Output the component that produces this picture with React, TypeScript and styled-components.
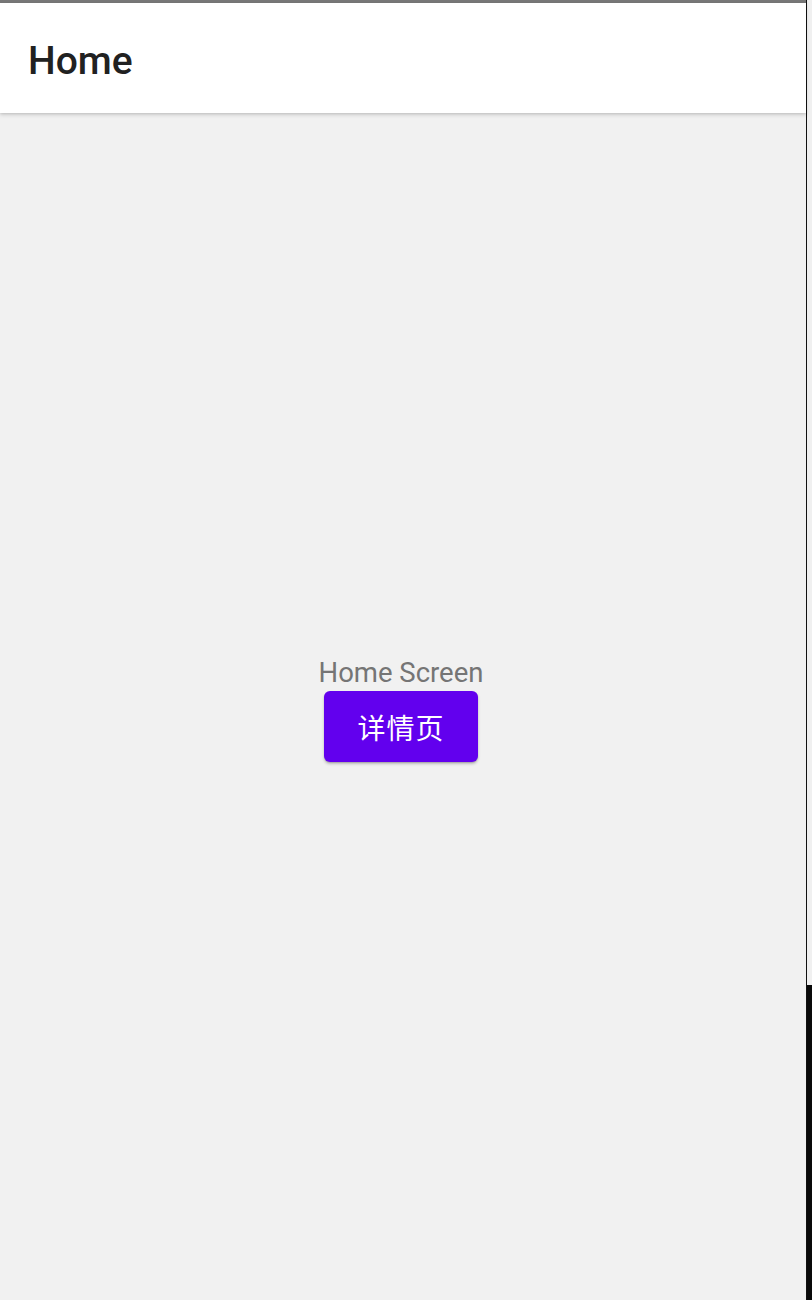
import React from "react";
import styled, { createGlobalStyle } from "styled-components";

const Global = createGlobalStyle`
  html, body { margin: 0; padding: 0; background: #000; }
  body { font-family: Roboto, "Noto Sans", sans-serif; }
`;

const Frame = styled.div`
  display: flex;
  width: 812px;
  height: 1300px;
  overflow: hidden;
`;

const Screen = styled.div`
  width: 806px;
  height: 100%;
  display: flex;
  flex-direction: column;
  background: #f1f1f1;
  border-top: 3px solid #777777;
  box-sizing: border-box;
`;

const Edge = styled.div`
  width: 6px;
  display: flex;
  flex-direction: column;
  border-left: 1px solid #111;
  box-sizing: border-box;
`;

const EdgePart = styled.div<{ $dark?: boolean; $h?: number }>`
  flex: ${(p) => (p.$h ? `0 0 ${p.$h}px` : "1")};
  background: ${(p) => (p.$dark ? "#0a0a0a" : "#f0f0f0")};
`;

const AppBar = styled.header`
  height: 110px;
  flex: 0 0 110px;
  background: #ffffff;
  display: flex;
  align-items: center;
  padding-left: 28px;
  box-shadow: 0 2px 4px rgba(0, 0, 0, 0.14), 0 1px 2px rgba(0, 0, 0, 0.08);
  position: relative;
  z-index: 1;
`;

const Title = styled.h1`
  margin: 0;
  margin-top: 5px;
  font-family: Roboto, sans-serif;
  font-weight: 500;
  font-size: 39px;
  line-height: 46px;
  color: #212121;
`;

const Body = styled.main`
  flex: 1;
  display: flex;
  flex-direction: column;
  align-items: center;
  justify-content: center;
  padding-top: 7px;
  padding-right: 4px;
`;

const Caption = styled.div`
  font-family: Roboto, sans-serif;
  font-size: 27.5px;
  line-height: 30px;
  color: #757575;
`;

const Button = styled.button`
  margin-top: 3px;
  width: 154px;
  height: 71px;
  border: none;
  border-radius: 6px;
  background: #6200ee;
  color: #ffffff;
  font-family: Roboto, "Noto Sans CJK SC", sans-serif;
  font-size: 28px;
  letter-spacing: 1px;
  box-shadow: 0 2px 3px rgba(0, 0, 0, 0.22), 0 1px 1px rgba(0, 0, 0, 0.12);
  cursor: pointer;
`;

export default function App() {
  return (
    <>
      <Global />
      <Frame>
        <Screen>
          <AppBar>
            <Title>Home</Title>
          </AppBar>
          <Body>
            <Caption>Home Screen</Caption>
            <Button>详情页</Button>
          </Body>
        </Screen>
        <Edge>
          <EdgePart $h={985} />
          <EdgePart $dark />
        </Edge>
      </Frame>
    </>
  );
}
